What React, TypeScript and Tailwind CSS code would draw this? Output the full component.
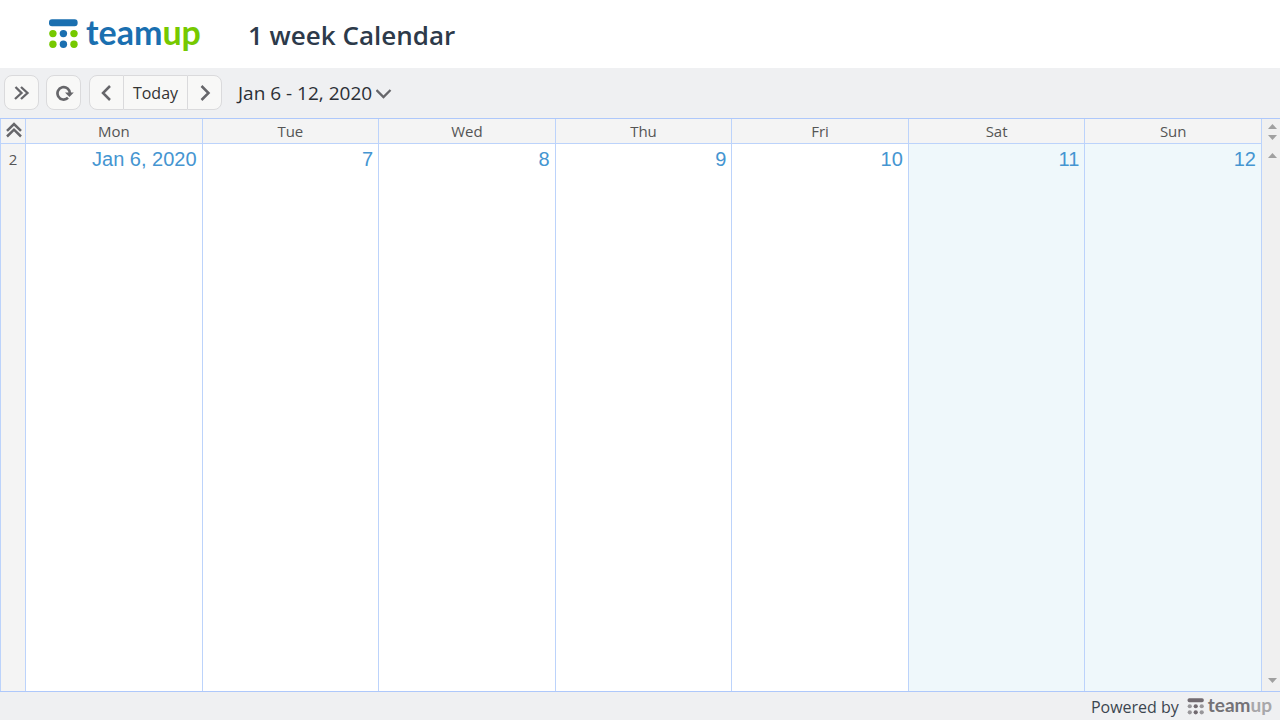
const DAYS = [
  { name: "Mon", label: "Jan 6, 2020", weekend: false },
  { name: "Tue", label: "7", weekend: false },
  { name: "Wed", label: "8", weekend: false },
  { name: "Thu", label: "9", weekend: false },
  { name: "Fri", label: "10", weekend: false },
  { name: "Sat", label: "11", weekend: true },
  { name: "Sun", label: "12", weekend: true },
];

const TOOL_BUTTON =
  "flex h-[35px] w-[35px] items-center justify-center border border-[#dadadc] bg-[#f8f8f7]";

function LogoMark({ className, bar, side, middle }: { className: string; bar: string; side: string; middle: string }) {
  return (
    <svg viewBox="0 0 30 30" className={className} aria-hidden="true">
      <rect x="1" y="0.3" width="28.6" height="7" rx="3" fill={bar} />
      {[14.6, 25.2].map((cy) => (
        <g key={cy}>
          <circle cx="4.9" cy={cy} r="3.7" fill={side} />
          <circle cx="15.4" cy={cy} r="3.7" fill={middle} />
          <circle cx="26" cy={cy} r="3.7" fill={side} />
        </g>
      ))}
    </svg>
  );
}

function Stroke({ d, className, width = 2.5 }: { d: string; className: string; width?: number }) {
  return (
    <svg viewBox="0 0 16 16" className={className} fill="none" stroke="#66666a" strokeWidth={width} aria-hidden="true">
      <path d={d} />
    </svg>
  );
}

function Triangle({ down = false }: { down?: boolean }) {
  return (
    <svg viewBox="0 0 9 5" className="h-[5px] w-[9px]" fill="#a0a0a0" aria-hidden="true">
      <path d={down ? "M0 0h9L4.5 5z" : "M0 5h9L4.5 0z"} />
    </svg>
  );
}

function Header() {
  return (
    <header className="flex h-[68px] shrink-0 items-center bg-white pl-12">
      <a href="#" className="flex w-[200px] items-center gap-2" aria-label="teamup">
        <LogoMark className="h-[30px] w-[30px]" bar="#1a6fb0" side="#76c900" middle="#1a6fb0" />
        <span className="pb-1 font-['Lato',sans-serif] text-[34px] leading-8 font-bold text-[#1a6fb0]">
          team<span className="text-[#76c900]">up</span>
        </span>
      </a>
      <h1 className="pt-0.5 text-[26px] font-semibold text-[#2d3a4a]">1 week Calendar</h1>
    </header>
  );
}

function Toolbar() {
  return (
    <div className="flex h-[50px] shrink-0 items-center px-1 pb-px">
      <button type="button" className={`${TOOL_BUTTON} mr-[7px] rounded-lg`} aria-label="Show panel">
        <Stroke className="h-4 w-4" width={2.3} d="M1.500 2L7.500 8l-6.500 6M7 2l6.500 6L7 14" />
      </button>
      <button type="button" className={`${TOOL_BUTTON} mr-2 rounded-lg`} aria-label="Refresh">
        <svg viewBox="0 0 18 18" className="ml-0.5 h-[18px] w-[18px]" fill="none" aria-hidden="true">
          <path d="M12 13.8A6.2 6.2 0 1 1 13.9 9.5" stroke="#66666a" strokeWidth="2.7" />
          <path d="M9 8.5h8.8l-4.4 4.6z" fill="#66666a" />
        </svg>
      </button>
      <div className="flex">
        <button type="button" className={`${TOOL_BUTTON} rounded-l-lg`} aria-label="Previous week">
          <Stroke className="h-4 w-4" d="M11 1L4 8l7 7" />
        </button>
        <button
          type="button"
          className="h-[35px] w-[63px] border-y border-[#dadadc] bg-[#f8f8f7] text-base text-[#333]"
        >
          Today
        </button>
        <button type="button" className={`${TOOL_BUTTON} rounded-r-lg`} aria-label="Next week">
          <Stroke className="h-4 w-4" d="M4.500 1l7 7-7 7" />
        </button>
      </div>
      <button type="button" className="ml-4 flex items-center gap-1 pt-0.5 text-[19px] text-[#2b2f36]">
        Jan 6 - 12, 2020
        <Stroke className="h-4 w-4" width={2.3} d="M0.500 4l7 7 7-7" />
      </button>
    </div>
  );
}

function WeekTable() {
  return (
    <div className="min-w-0 flex-1">
      <table className="h-full w-full table-fixed border-separate border-spacing-0">
        <thead>
          <tr className="h-[25px] bg-[#f4f4f4] text-[15px] leading-5 text-[#555]">
            <th className="w-[26px] border-x border-b border-[#bcd3fb] p-0">
              <button type="button" className="block w-full pb-0.5 pl-[5px]" aria-label="Collapse header">
                <Stroke className="h-4 w-4" d="M1 8.8l7-6.8 7 6.8M1 14.5l7-6.8 7 6.8" />
              </button>
            </th>
            {DAYS.map(({ name }) => (
              <th key={name} scope="col" className="border-r border-b border-[#bcd3fb] p-0 font-normal">
                {name}
              </th>
            ))}
          </tr>
        </thead>
        <tbody>
          <tr className="align-top">
            <th
              scope="row"
              className="border-x border-[#bcd3fb] bg-[#f4f4f4] p-0 pt-[3px] text-[15px] leading-6 font-normal text-[#555]"
            >
              2
            </th>
            {DAYS.map(({ name, label, weekend }) => (
              <td
                key={name}
                className={`border-r border-[#bcd3fb] px-[5px] pt-[3px] text-right ${weekend ? "bg-[#eff8fb]" : "bg-white"}`}
              >
                <a href="#" className="block font-['Liberation_Sans',sans-serif] text-xl leading-6 text-[#4595d1]">
                  {label}
                </a>
              </td>
            ))}
          </tr>
        </tbody>
      </table>
    </div>
  );
}

function ScrollRail() {
  return (
    <div className="flex w-[18px] shrink-0 flex-col items-center bg-[#f0f0f0] pt-[5px] pr-px pb-2 pl-1">
      <button type="button" aria-label="Scroll all-day up">
        <Triangle />
      </button>
      <button type="button" className="mt-[6px]" aria-label="Scroll all-day down">
        <Triangle down />
      </button>
      <button type="button" className="mt-[13px]" aria-label="Scroll up">
        <Triangle />
      </button>
      <button type="button" className="mt-auto" aria-label="Scroll down">
        <Triangle down />
      </button>
    </div>
  );
}

function Footer() {
  return (
    <footer className="flex h-7 shrink-0 items-center justify-end gap-2 pr-2 text-base text-[#3c4650]">
      <span className="pt-0.5">Powered by</span>
      <a href="#" className="flex items-center gap-1" aria-label="teamup">
        <LogoMark className="h-[17px] w-[17px]" bar="#716a70" side="#98969a" middle="#716a70" />
        <span className="pb-0.5 font-['Lato',sans-serif] text-[19px] leading-5 font-bold text-[#747277]">
          team<span className="text-[#a8a7aa]">up</span>
        </span>
      </a>
    </footer>
  );
}

export default function App() {
  return (
    <div className="flex h-screen flex-col bg-[#eff0f2] font-['Open_Sans',sans-serif]">
      <Header />
      <Toolbar />
      <main className="flex min-h-0 flex-1 border-y border-[#aec8fb]">
        <WeekTable />
        <ScrollRail />
      </main>
      <Footer />
    </div>
  );
}
